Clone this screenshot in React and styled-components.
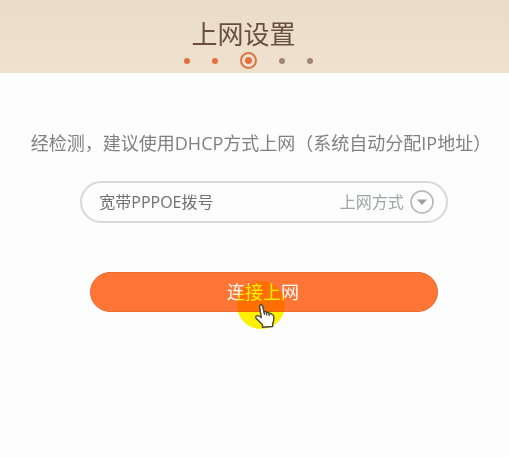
import React, { useState } from "react";
import styled, { createGlobalStyle } from "styled-components";

const steps = ["done", "done", "current", "todo", "todo"];

const App = () => {
  const [mode, setMode] = useState("pppoe");
  return (
    <>
      <GlobalStyle />
      <Header>
        <Title>上网设置</Title>
        <Steps>
          {steps.map((state, i) => (
            <Step key={i} $state={state} />
          ))}
        </Steps>
      </Header>
      <Main>
        <Hint>经检测，建议使用DHCP方式上网（系统自动分配IP地址）</Hint>
        <Field>
          <Select
            id="mode"
            value={mode}
            onChange={(e) => setMode(e.target.value)}
          >
            <option value="pppoe">宽带PPPOE拨号</option>
            <option value="dhcp">DHCP</option>
          </Select>
          <Label htmlFor="mode">上网方式</Label>
          <Arrow viewBox="0 0 24 24" aria-hidden="true">
            <circle cx="12" cy="12" r="11" />
            <path d="M7 9.6h10L12 15z" />
          </Arrow>
        </Field>
        <ConnectButton type="button">
          连接上网
          <Halo />
          <Hand viewBox="0 0 20 24" aria-hidden="true">
            <path d="M4.6 2.4C4.4 1.4 5 .8 5.900.8s1.600.5 1.800 1.500l1.200 5.300c1.100-.4 2.100 0 2.500.8 1.100-.4 2.100 0 2.500.9 1.200-.4 2.200.1 2.600 1.100 1.300-.1 2 .6 2.200 1.900.3 2.500.3 4.700-1 7v3.200l-10.200.8v-2.700c-1.800-1.400-3.300-3.600-5.900-5.700C.2 13.400.7 11.600 2.400 11.600c1.500 0 2.700.9 3.900 2z" />
            <path d="M8.900 7.600l.7 3.300M11.400 8.400l.5 2.900M13.900 9.300l.4 2.600" />
          </Hand>
        </ConnectButton>
      </Main>
    </>
  );
};

const GlobalStyle = createGlobalStyle`
  * {
    box-sizing: border-box;
  }

  body {
    margin: 0;
    background: #fdfdfd;
    font-family: "Open Sans", "Noto Sans CJK SC", sans-serif;
  }
`;

const Header = styled.header`
  display: flex;
  flex-direction: column;
  align-items: center;
  padding: 16px 12px 4px 0;
  background: linear-gradient(#e9dcc8, #eee1cd);
`;

const Title = styled.h1`
  margin: 0;
  padding-right: 10px;
  color: #69503e;
  font-size: 26px;
  font-weight: 400;
  line-height: 36px;
`;

const Steps = styled.div`
  display: flex;
  align-items: center;
  gap: 22px;
`;

const Step = styled.span`
  width: ${({ $state }) => ($state === "current" ? 17 : 6)}px;
  height: ${({ $state }) => ($state === "current" ? 17 : 6)}px;
  border: ${({ $state }) =>
    $state === "current" ? "2px solid #dc7546" : "none"};
  border-radius: 50%;
  background: ${({ $state }) =>
    ({
      done: "#e5703c",
      current: "radial-gradient(circle, #e5703c 3px, transparent 4px)",
      todo: "#a48672",
    })[$state]};
`;

const Main = styled.main`
  display: flex;
  flex-direction: column;
  align-items: center;
  padding: 56px 0 40px 19px;
`;

const Hint = styled.p`
  margin: 0 0 24px;
  padding-right: 6px;
  color: #808080;
  font-size: 18px;
  line-height: 28px;
  white-space: nowrap;
`;

const Field = styled.div`
  display: flex;
  align-items: center;
  width: 75%;
  height: 42px;
  padding: 0 12px 0 17px;
  border: 2px solid #d8d8d8;
  border-radius: 21px;
`;

const Select = styled.select`
  flex: 1;
  min-width: 0;
  height: 100%;
  padding: 0;
  border: 0;
  outline: 0;
  appearance: none;
  background: transparent;
  color: #707070;
  font-family: inherit;
  font-size: 16px;
`;

const Label = styled.label`
  color: #a0a4a4;
  font-size: 16px;
  line-height: 20px;
`;

const Arrow = styled.svg`
  width: 24px;
  height: 24px;
  margin-left: 6px;

  circle {
    fill: none;
    stroke: #b4b4b4;
    stroke-width: 1.5;
  }

  path {
    fill: #a0a0a0;
  }
`;

const ConnectButton = styled.button`
  position: relative;
  width: 71%;
  height: 40px;
  margin-top: 49px;
  padding: 0 2px 0 0;
  border: 1px solid #ea6d33;
  border-radius: 20px;
  background: #ff7535;
  color: #fff;
  font-family: inherit;
  font-size: 18px;
  line-height: 36px;
  cursor: pointer;
`;

const Halo = styled.span`
  position: absolute;
  top: 8px;
  left: calc(50% - 27px);
  width: 48px;
  height: 48px;
  border-radius: 50%;
  background: #fff200;
  mix-blend-mode: multiply;
`;

const Hand = styled.svg`
  position: absolute;
  top: 31px;
  left: calc(50% - 9px);
  width: 20px;
  height: 24px;
  fill: #fff;
  stroke: #4a4538;
  stroke-width: 1.4;
  stroke-linejoin: round;
`;

export default App;
